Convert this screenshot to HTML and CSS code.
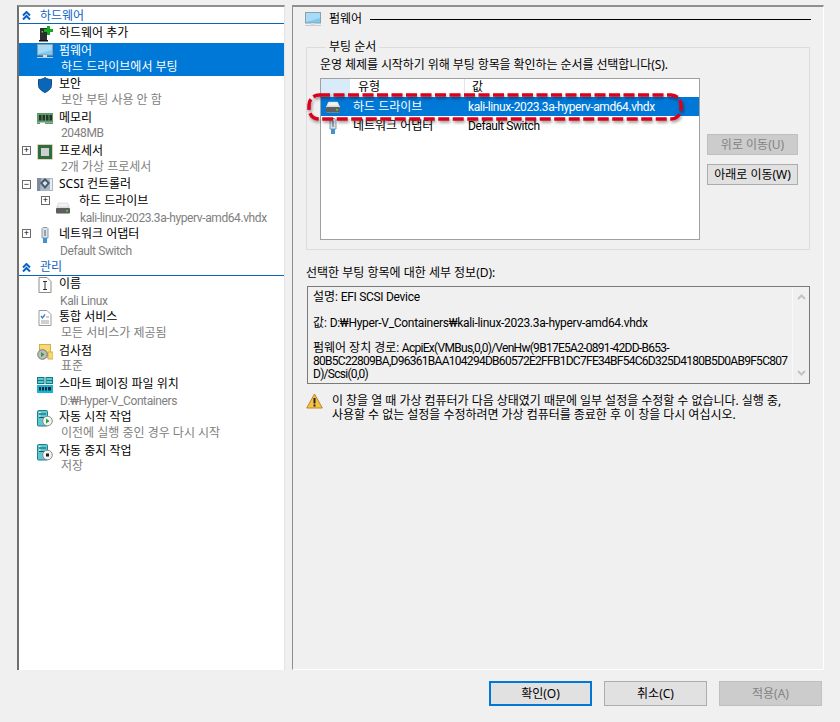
FILE: index.html
```html
<!DOCTYPE html>
<html lang="ko">
<head>
<meta charset="utf-8">
<title>펌웨어</title>
<link rel="stylesheet" href="styles.css">
</head>
<body>
<svg class="defs" width="0" height="0">
  <symbol id="chev" viewBox="0 0 9 9"><path d="M1 4.500 4.500 1 8 4.500M1 8.500 4.500 5 8 8.500" fill="none" stroke="#0a62c4" stroke-width="2"/></symbol>
  <symbol id="mon" viewBox="0 0 16 15"><rect x="0.500" y="0.500" width="15" height="10.500" fill="#7fc8f0" stroke="#8aa0ad"/><path d="M1 1h14v5L1 10z" fill="#a8dcf6"/><rect x="0" y="13" width="16" height="1" fill="#c3ccd2"/><rect x="6" y="11" width="4" height="2" fill="#d7dde0"/></symbol>
  <symbol id="hdd" viewBox="0 0 14 12"><path d="M2.500 1h9L14 6v4.500l-1 1H1l-1-1V6z" fill="#e3e3e3"/><path d="M2.500 1h9L13 5H1z" fill="#f2f2f2" stroke="#c4c4c4" stroke-width=".5"/><rect y="6" width="14" height="5.500" rx="1" fill="#5e5e5e"/><rect x="10" y="8" width="2" height="1.600" fill="#3fd14a"/></symbol>
  <symbol id="nic" viewBox="0 0 8 16"><path d="M1 1.500 2 .5h4l1 1V11H1z" fill="#d9e2e8" stroke="#8c9aa3"/><rect x="3" y="3" width="2" height="6" fill="#8fa3b0"/><rect x="2" y="11" width="4" height="5" fill="#3f93d0"/></symbol>
  <symbol id="auto" viewBox="0 0 16 17"><rect x="0.500" y="0.500" width="10" height="15.500" rx="1" fill="#5fc7cf" stroke="#1f7f8c"/><path d="M2 4h7M2 7.500h7" stroke="#0f5a66"/><rect x="2" y="2" width="1.500" height="1" fill="#fff"/><rect x="2" y="5.500" width="1.500" height="1" fill="#fff"/><circle cx="10.500" cy="11" r="4.800" fill="#f4f4f4" stroke="#8a8a8a"/></symbol>
</svg>

<div class="main">
  <nav class="tree">
    <div class="section"><svg class="chev"><use href="#chev"/></svg><span>하드웨어</span></div>

    <div class="row one first">
      <span class="exp"></span>
      <svg class="ico" width="16" height="16" viewBox="0 0 16 16"><path d="M3 2h7v12H3z" fill="#2e2e2e"/><rect x="2" y="14" width="9" height="1.500" fill="#111"/><rect x="4.500" y="5" width="1.500" height="1.500" fill="#37d64a"/><path d="M10 0h3v3h3v3h-3v3h-3V6H7V3h3z" fill="#12a81f"/></svg>
      <div class="txt"><div class="ttl">하드웨어 추가</div></div>
    </div>

    <div class="row sel">
      <span class="exp"></span>
      <svg class="ico top" width="16" height="15"><use href="#mon"/></svg>
      <div class="txt"><div class="ttl">펌웨어</div><div class="sub">하드 드라이브에서 부팅</div></div>
    </div>

    <div class="row">
      <span class="exp"></span>
      <svg class="ico top" width="16" height="16" viewBox="0 0 16 16"><path d="M8 .5c2 1.500 4 2 6.500 2v6c0 3-3 5.500-6.500 7-3.500-1.500-6.500-4-6.500-7v-6C4 2.500 6 2 8 .5z" fill="#0b66b8" stroke="#0a4f8c"/></svg>
      <div class="txt"><div class="ttl">보안</div><div class="sub">보안 부팅 사용 안 함</div></div>
    </div>

    <div class="row">
      <span class="exp"></span>
      <svg class="ico top low" width="16" height="11" viewBox="0 0 16 11"><rect width="16" height="9.500" fill="#5f9a6c"/><rect y="9.500" width="3" height="1.500" fill="#5f9a6c"/><rect x="8" y="9.500" width="8" height="1.500" fill="#5f9a6c"/><path d="M2 2h2.500v5.500H2zM5.500 2H8v5.500H5.500zM9 2h2.500v5.500H9zM12.500 2H15v5.500h-2.500z" fill="#26352a"/></svg>
      <div class="txt"><div class="ttl">메모리</div><div class="sub lat">2048MB</div></div>
    </div>

    <div class="row">
      <span class="exp box">+</span>
      <svg class="ico top" width="16" height="16" viewBox="0 0 16 16"><rect x="0.500" y="0.500" width="15" height="15" fill="#c9a95a"/><rect x="1" y="1" width="14" height="14" fill="#2f6b45"/><rect x="4" y="4" width="8" height="8" fill="#cfcfcf"/></svg>
      <div class="txt"><div class="ttl">프로세서</div><div class="sub">2개 가상 프로세서</div></div>
    </div>

    <div class="row one">
      <span class="exp box">−</span>
      <svg class="ico" width="16" height="15" viewBox="0 0 16 15"><rect y="1" width="16" height="13" fill="#a9b7c6"/><path d="M0 1h4l-1 13H0z" fill="#7d8d9e"/><path d="M8 1l5 5-5 6-5-6z" fill="#46586a"/><path d="M8 4l2.500 2L8 9 5.500 6z" fill="#dfe5ea"/><rect x="13" y="2" width="2" height="11" fill="#e8ecef"/></svg>
      <div class="txt"><div class="ttl">SCSI 컨트롤러</div></div>
    </div>

    <div class="row nested">
      <span class="exp box">+</span>
      <svg class="ico hd" width="14" height="12"><use href="#hdd"/></svg>
      <div class="txt"><div class="ttl">하드 드라이브</div><div class="sub flat lat">kali-linux-2023.3a-hyperv-amd64.vhdx</div></div>
    </div>

    <div class="row">
      <span class="exp box">+</span>
      <svg class="ico top nicico" width="8" height="16"><use href="#nic"/></svg>
      <div class="txt"><div class="ttl">네트워크 어댑터</div><div class="sub flat lat">Default Switch</div></div>
    </div>

    <div class="section"><svg class="chev"><use href="#chev"/></svg><span>관리</span></div>

    <div class="row">
      <span class="exp"></span>
      <svg class="ico top doc" width="14" height="16" viewBox="0 0 14 16"><path d="M1 .500h8l4 4v11H1z" fill="#fff" stroke="#8c8c8c"/><path d="M5 4.500h4M5 12.500h4M7 4.500v8" stroke="#333" fill="none"/></svg>
      <div class="txt"><div class="ttl">이름</div><div class="sub flat lat">Kali Linux</div></div>
    </div>

    <div class="row">
      <span class="exp"></span>
      <svg class="ico top doc" width="14" height="16" viewBox="0 0 14 16"><path d="M1 .500h8l4 4v11H1z" fill="#fff" stroke="#9a9a9a"/><path d="M3 6l1.500 2L7 4.500" stroke="#2f7fd0" fill="none" stroke-width="1.300"/><path d="M8 7h3M3 11h8M3 13h8" stroke="#a0a0a0"/></svg>
      <div class="txt"><div class="ttl">통합 서비스</div><div class="sub">모든 서비스가 제공됨</div></div>
    </div>

    <div class="row">
      <span class="exp"></span>
      <svg class="ico top" width="16" height="16" viewBox="0 0 16 16"><rect x="2.500" y="0.500" width="11" height="13" fill="#f5d877" stroke="#d8b040"/><rect x="11" y="8" width="5" height="7" fill="#f5d877" stroke="#d8b040"/><circle cx="5.500" cy="10.500" r="4.800" fill="#bdbdbd" stroke="#777"/><path d="M4 8l3.500 2.500L4 13z" fill="#2d9c3a"/></svg>
      <div class="txt"><div class="ttl">검사점</div><div class="sub">표준</div></div>
    </div>

    <div class="row">
      <span class="exp"></span>
      <svg class="ico top" width="16" height="16" viewBox="0 0 16 16"><rect x="0.500" y="0.500" width="6.500" height="6" fill="#5fc7cf" stroke="#127a86"/><rect x="9" y="0.500" width="6.500" height="6" fill="#5fc7cf" stroke="#127a86"/><path d="M1 3.500h5.500M9.500 3.500H15" stroke="#127a86"/><rect y="8" width="16" height="8" fill="#12b5d8"/><path d="M2 10h2v3.500H2zM5 10h2v3.500H5zM8 10h2v3.500H8zM11 10h3v3.500h-3z" fill="#1a2a30"/></svg>
      <div class="txt"><div class="ttl">스마트 페이징 파일 위치</div><div class="sub flat lat">D:₩Hyper-V_Containers</div></div>
    </div>

    <div class="row">
      <span class="exp"></span>
      <svg class="ico top" width="16" height="17" viewBox="0 0 16 17"><use href="#auto" width="16" height="17"/><path d="M9 8.500l3.500 2.500L9 13.500z" fill="#22a52e"/></svg>
      <div class="txt"><div class="ttl">자동 시작 작업</div><div class="sub">이전에 실행 중인 경우 다시 시작</div></div>
    </div>

    <div class="row">
      <span class="exp"></span>
      <svg class="ico top" width="16" height="17" viewBox="0 0 16 17"><use href="#auto" width="16" height="17"/><rect x="9" y="9.500" width="3" height="3" fill="#1c1c1c"/></svg>
      <div class="txt"><div class="ttl">자동 중지 작업</div><div class="sub">저장</div></div>
    </div>
  </nav>

  <section class="pane">
    <header class="head">
      <svg width="16" height="15"><use href="#mon"/></svg>
      <span class="head-title">펌웨어</span>
      <span class="head-line"></span>
    </header>

    <fieldset class="group">
      <legend>부팅 순서</legend>
      <p class="desc">운영 체제를 시작하기 위해 부팅 항목을 확인하는 순서를 선택합니다(S).</p>
      <div class="boot">
        <div class="list">
          <div class="lh"><span class="lh-a"></span><span class="lh-b">유형</span><span class="lh-c">값</span></div>
          <div class="lr on">
            <svg class="lr-ico" width="14" height="12"><use href="#hdd"/></svg>
            <span class="lr-a">하드 드라이브</span><span class="lr-b lat">kali-linux-2023.3a-hyperv-amd64.vhdx</span>
          </div>
          <div class="lr">
            <svg class="lr-ico nic2" width="8" height="16"><use href="#nic"/></svg>
            <span class="lr-a">네트워크 어댑터</span><span class="lr-b lat">Default Switch</span>
          </div>
        </div>
        <div class="moves">
          <button class="btn off" disabled>위로 이동(U)</button>
          <button class="btn">아래로 이동(W)</button>
        </div>
      </div>
      <svg class="mark" width="380" height="32" viewBox="0 0 380 32"><rect x="3" y="3" width="372" height="24" rx="10" fill="none" stroke="#dc001c" stroke-width="3.500" stroke-dasharray="11 3.500"/></svg>
    </fieldset>

    <div class="dlabel">선택한 부팅 항목에 대한 세부 정보(D):</div>
    <div class="details">
      <div class="dtext">
        <p><span class="lab">설명:</span> EFI SCSI Device</p>
        <p><span class="lab">값:</span> D:₩Hyper-V_Containers₩kali-linux-2023.3a-hyperv-amd64.vhdx</p>
        <p><span class="lab">펌웨어 장치 경로:</span> <span class="hex">AcpiEx(VMBus,0,0)/VenHw(9B17E5A2-0891-42DD-B653-<br>80B5C22809BA,D96361BAA104294DB60572E2FFB1DC7FE34BF54C6D325D4180B5D0AB9F5C807<br>D)/Scsi(0,0)</span></p>
      </div>
      <div class="sbar">
        <svg width="9" height="6" viewBox="0 0 9 6"><path d="M1 5l3.500-3.500L8 5" fill="none" stroke="#c4c4c4" stroke-width="2"/></svg>
        <svg width="9" height="6" viewBox="0 0 9 6"><path d="M1 1l3.500 3.500L8 1" fill="none" stroke="#c4c4c4" stroke-width="2"/></svg>
      </div>
    </div>

    <div class="warn">
      <svg width="17" height="16" viewBox="0 0 17 16"><path d="M8.500 1 16.300 15H.7z" fill="#f5c242" stroke="#b8862b"/><path d="M8.500 5v5.500" stroke="#222" stroke-width="2"/><rect x="7.500" y="11.500" width="2" height="2" fill="#222"/></svg>
      <p>이 창을 열 때 가상 컴퓨터가 다음 상태였기 때문에 일부 설정을 수정할 수 없습니다. 실행 중,<br>사용할 수 없는 설정을 수정하려면 가상 컴퓨터를 종료한 후 이 창을 다시 여십시오.</p>
    </div>
  </section>
</div>

<footer class="foot">
  <button class="btn wide primary">확인(O)</button>
  <button class="btn wide">취소(C)</button>
  <button class="btn wide off" disabled>적용(A)</button>
</footer>
</body>
</html>
```
FILE: styles.css
```css
* { box-sizing: border-box; }
html, body { margin: 0; padding: 0; }
body {
  width: 840px;
  height: 722px;
  overflow: hidden;
  background: #f0f0f0;
  color: #000;
  font: 12px/16px "Noto Sans", "Noto Sans CJK KR", sans-serif;
}
p { margin: 0; }
.defs { position: absolute; }
.lat { font-family: Roboto, "Noto Sans CJK KR", sans-serif; letter-spacing: -0.4px; }

.main { display: flex; gap: 7px; padding: 5px 0 0 17px; height: 670px; }

.tree {
  width: 268px;
  background: #fff;
  border-top: 2px solid #8f8f8f;
  border-left: 2px solid #6f6f6f;
  border-right: 1px solid #e4e4e4;
  padding-top: 1px;
}
.section {
  display: flex;
  align-items: center;
  height: 15.3px;
  padding-left: 3px;
  color: #0a62c4;
  border-bottom: 1px solid #0a62c4;
  box-sizing: content-box;
}
.section span { margin-left: 9px; }
.chev { width: 9px; height: 9px; }

.row {
  display: flex;
  align-items: flex-start;
  height: 33.33px;
  padding-left: 3px;
  line-height: 16.67px;
}
.row.one { height: 16.67px; align-items: center; }
.row.first { height: 18.7px; }
.row.nested { padding-left: 22px; }
.row.sel { background: #0078d7; color: #fff; }
.row.sel .sub { color: #fff; }

.exp { flex: none; width: 9px; height: 9px; margin-top: 3px; }
.exp.box {
  border: 1px solid #6b6b6b;
  background: #fff;
  color: #000;
  font: 9px/7px "Liberation Sans", sans-serif;
  text-align: center;
}
.row.one .exp { margin-top: 0; }
.ico { flex: none; margin-left: 6px; margin-right: 6px; }
.ico.top { margin-top: 1px; }
.ico.low { margin-top: 3px; }
.ico.hd { margin-left: 6px; margin-top: 9px; margin-right: 9px; }
.ico.nicico { margin-left: 10px; margin-right: 10px; }
.ico.doc { margin-left: 7px; margin-right: 7px; }
.txt { flex: 1; min-width: 0; }
.sub { color: #808080; padding-left: 2px; margin-top: -1px; white-space: nowrap; }
.sub.flat { padding-left: 1px; margin-top: 0; }

.pane {
  position: relative;
  width: 532px;
  height: 665px;
  border-top: 2px solid #8f8f8f;
  border-left: 1px solid #8f8f8f;
  border-right: 1px solid #fff;
  border-bottom: 1px solid #fff;
  padding: 4px 12px 0 12px;
}
.head { display: flex; align-items: center; height: 16px; }
.head-title { margin-left: 8px; }
.head-line { flex: 1; height: 1px; margin-left: 8px; background: #000; }

.group {
  position: relative;
  margin: 13px 0 0 1px;
  padding: 0 0 10px 13px;
  width: 504px;
  height: 210px;
  border: 1px solid #dcdcdc;
  min-width: 0;
}
.group legend { padding: 0 3px; margin-left: 6px; line-height: 14px; }
.desc { margin-top: 3px; height: 16px; letter-spacing: -0.08px; }
.boot { display: flex; margin-top: 5px; }
.list {
  width: 380px;
  height: 162px;
  background: #fff;
  border: 1px solid #a0a0a0;
}
.lh { display: flex; height: 18px; }
.lh-a { width: 29px; background: #d9ebf9; }
.lh-b { width: 115px; padding-left: 8px; border-right: 1px solid #e5e5e5; }
.lh-c { padding-left: 7px; }
.lr { display: flex; align-items: center; height: 19px; }
.lr.on { background: #0078d7; color: #fff; }
.lr-ico { margin-left: 5px; width: 14px; flex: none; }
.lr-ico.nic2 { margin-left: 8px; width: 8px; margin-right: 3px; }
.lr-a { width: 115px; margin-left: 13px; }
.lr-b { white-space: nowrap; }
.moves { display: flex; flex-direction: column; gap: 9px; margin: 56px 0 0 7px; }
.btn {
  width: 91px;
  height: 21px;
  padding: 0;
  font: inherit;
  line-height: 17px;
  color: #000;
  background: #e1e1e1;
  border: 1px solid #adadad;
}
.btn.off { background: #cccccc; border-color: #bfbfbf; color: #838383; }
.btn.wide { width: 103px; height: 25px; }
.btn.primary { border: 2px solid #0078d7; }
.mark {
  position: absolute;
  left: -1px;
  top: 38px;
  filter: drop-shadow(1px 2px 1.500px rgba(0,0,0,.4));
}

.dlabel { margin: 15px 0 0 1px; height: 21px; }
.details {
  display: flex;
  width: 503px;
  height: 98px;
  margin: 0 0 0 2px;
  border: 1px solid #7a7a7a;
  line-height: 13px;
}
.dtext {
  flex: 1;
  min-width: 0;
  padding: 4px 0 0 5px;
  white-space: nowrap;
  font-family: Roboto, "Noto Sans CJK KR", sans-serif;
  letter-spacing: -0.3px;
}
.dtext p { margin-bottom: 12.700px; }
.lab { letter-spacing: 0; }
.hex { letter-spacing: -0.72px; }
.sbar {
  width: 17px;
  flex: none;
  border-left: 1px solid #f9f9f9;
  display: flex;
  flex-direction: column;
  justify-content: space-between;
  align-items: center;
  padding: 7px 0;
}
.warn { display: flex; align-items: flex-start; margin: 8px 0 0 1px; width: 500px; }
.warn svg { flex: none; margin-top: 1px; margin-right: 9px; }
.warn p { line-height: 14px; margin-top: 2px; white-space: nowrap; letter-spacing: -0.03px; }

.foot { display: flex; justify-content: flex-end; gap: 12px; padding: 11px 18px 0 0; }
```
